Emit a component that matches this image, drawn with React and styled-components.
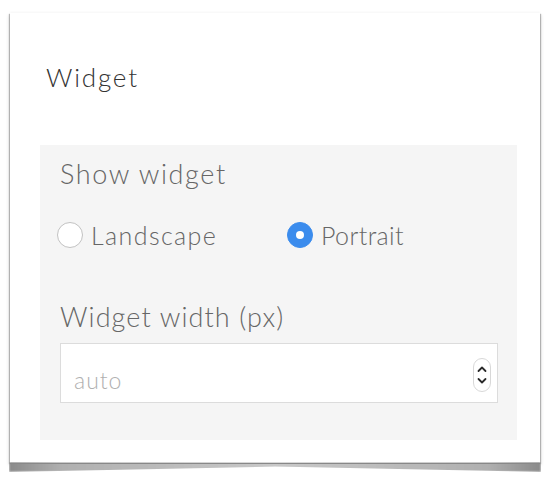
import React from "react";
import styled, { createGlobalStyle } from "styled-components";

const Global = createGlobalStyle`
  html, body {
    margin: 0;
    padding: 0;
    background: #fff;
  }
  body {
    font-family: Lato, "Open Sans", sans-serif;
  }
`;

const Page = styled.div`
  width: 552px;
  height: 490px;
  padding: 13px 12px 0 10px;
  box-sizing: border-box;
`;

const Card = styled.section`
  position: relative;
  z-index: 0;
  width: 530px;
  height: 450px;
  box-sizing: border-box;
  background: #fff;
  padding: 49px 23px 0 30px;
  box-shadow: -1px 1px 1px rgba(0, 0, 0, 0.25), 1px 1px 1px rgba(0, 0, 0, 0.25),
    -2px 2px 3px rgba(0, 0, 0, 0.07), 2px 2px 3px rgba(0, 0, 0, 0.07),
    0 -1px 2px rgba(0, 0, 0, 0.04);

  /* lifted bottom shadow, deeper at the corners */
  &::after {
    content: "";
    position: absolute;
    left: -1px;
    right: -1px;
    bottom: -9px;
    height: 10px;
    z-index: -1;
    background: linear-gradient(
      to right,
      #8a8a8a 0%,
      #b0b0b0 10%,
      #c8c8c8 50%,
      #b0b0b0 90%,
      #8a8a8a 100%
    );
    filter: blur(1.2px);
    clip-path: polygon(0 0, 100% 0, 100% 100%, 50% 45%, 0 100%);
  }
  &::before {
    content: "";
    position: absolute;
    left: 0;
    right: 0;
    bottom: -1px;
    height: 1px;
    background: #888;
  }
`;

const Title = styled.h2`
  margin: 0 0 52px 6px;
  font-size: 26px;
  line-height: 31px;
  font-weight: 300;
  color: #333;
  letter-spacing: 1.8px;
`;

const Panel = styled.div`
  background: #f5f5f5;
  height: 295px;
  box-sizing: border-box;
  padding: 13px 19px 0 20px;
`;

const Label = styled.div`
  font-size: 27px;
  font-weight: 300;
  color: #666;
  letter-spacing: ${(p) => p.spacing || "1.1px"};
  line-height: 32px;
`;

const RadioRow = styled.div`
  display: flex;
  align-items: center;
  height: 30px;
  margin: 30px 0 51px -3px;
`;

const RadioOption = styled.label`
  display: flex;
  align-items: center;
  gap: 8px;
  width: 230px;
  flex-shrink: 0;
  font-size: 25px;
  font-weight: 300;
  color: #666;
  letter-spacing: ${(p) => p.spacing || "1.4px"};
`;

const Dot = styled.span`
  width: 26px;
  height: 26px;
  border-radius: 50%;
  box-sizing: border-box;
  flex-shrink: 0;
  background: ${(p) => (p.checked ? "#3b8ced" : "#fff")};
  border: 1.5px solid ${(p) => (p.checked ? "#3b8ced" : "#c2c2c2")};
  display: flex;
  align-items: center;
  justify-content: center;
  &::after {
    content: "";
    width: 8px;
    height: 8px;
    border-radius: 50%;
    background: #fff;
    display: ${(p) => (p.checked ? "block" : "none")};
  }
`;

const Input = styled.div`
  margin-top: 10px;
  width: 438px;
  height: 60px;
  box-sizing: border-box;
  border: 1px solid #dcdcdc;
  background: #fff;
  display: flex;
  align-items: center;
  justify-content: space-between;
  padding: 0 6px 0 13px;
`;

const Placeholder = styled.span`
  margin-top: 14px;
  font-size: 23px;
  font-weight: 300;
  color: #b0b0b0;
  letter-spacing: 1px;
`;

const Spinner = styled.span`
  width: 18px;
  height: 34px;
  box-sizing: border-box;
  margin-top: 3px;
  border: 1px solid #d8d8d8;
  border-radius: 9px;
  display: flex;
  align-items: center;
  justify-content: center;
  background: #fff;
`;

export default function App() {
  return (
    <>
      <Global />
      <Page>
        <Card>
          <Title>Widget</Title>
          <Panel>
            <Label spacing="1.6px">Show widget</Label>
            <RadioRow>
              <RadioOption>
                <Dot />
                Landscape
              </RadioOption>
              <RadioOption spacing="0.4px">
                <Dot checked />
                Portrait
              </RadioOption>
            </RadioRow>
            <Label>Widget width (px)</Label>
            <Input>
              <Placeholder>auto</Placeholder>
              <Spinner>
                <svg width="12" height="28" viewBox="0 0 12 28" fill="none" stroke="#2a2a2a" strokeWidth="1.8" strokeLinecap="round" strokeLinejoin="round">
                  <path d="M2.5 10 L6 6.5 L9.5 10" />
                  <path d="M2.5 18 L6 21.5 L9.5 18" />
                </svg>
              </Spinner>
            </Input>
          </Panel>
        </Card>
      </Page>
    </>
  );
}
